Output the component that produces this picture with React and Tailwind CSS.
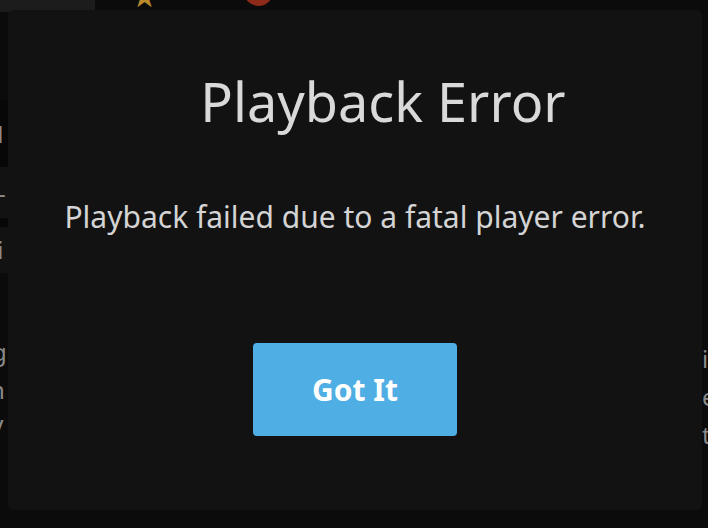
import React from 'react';

const font = { fontFamily: '"Noto Sans", "Open Sans", sans-serif' };

function Backdrop() {
    return (
        <div className="absolute inset-0 bg-[#0b0b0b]">
            {/* top strip of the page behind */}
            <div className="flex h-[12px]">
                <div className="w-[95px] bg-[#1c1c1c]" />
                <div className="relative flex-1">
                    <span className="absolute left-[36px] top-[-19px] text-[30px] leading-none text-[#b88a2c]">★</span>
                    <span className="absolute left-[149px] top-[-24px] h-[30px] w-[29px] rounded-full bg-[#8e2a1a]" />
                </div>
            </div>
            {/* clipped left column rows */}
            <div className="mt-[88px] flex w-[8px] flex-col overflow-hidden text-[24px] leading-none text-[#8a8a8a]">
                <div className="flex h-[67px] items-center bg-[#070707]">
                    <span className="-ml-[14px]">H</span>
                </div>
                <div className="flex h-[51px] items-center bg-[#121212]">
                    <span className="-ml-[2px]">-</span>
                </div>
                <div className="h-[9px] bg-[#070707]" />
                <div className="flex h-[46px] items-center bg-[#121212]">
                    <span className="-ml-[9px]">li</span>
                </div>
            </div>
            <div className="mt-[60px] flex w-[8px] flex-col overflow-hidden text-[24px] leading-[38px] text-[#8a8a8a]">
                <span className="-ml-[8px]">g</span>
                <span className="-ml-[10px]">n</span>
                <span className="-ml-[11px]">V</span>
            </div>
            <div className="absolute right-0 top-[340px] flex w-[6px] flex-col overflow-hidden text-[24px] leading-[38px] text-[#8a8a8a]">
                <span>i</span>
                <span>e</span>
                <span>t</span>
            </div>
        </div>
    );
}

export default function App() {
    return (
        <div className="relative h-[528px] w-[708px] overflow-hidden" style={font}>
            <Backdrop />
            {/* Error dialog */}
            <div className="absolute left-[8px] top-[10px] flex h-[500px] w-[694px] flex-col items-center rounded-[6px] bg-[#121212]">
                <h1 className="mt-[56px] pl-[56px] text-[54px] font-normal leading-[70px] text-[#d9d9d9]">
                    Playback Error
                </h1>
                <p className="mt-[61px] whitespace-nowrap text-[30px] leading-[40px] text-[#d4d4d4]">
                    Playback failed due to a fatal player error.
                </p>
                <button className="mt-[106px] flex h-[93px] w-[204px] items-center justify-center rounded-[4px] bg-[#4faee3] text-[30px] font-bold text-white">
                    Got It
                </button>
            </div>
        </div>
    );
}
